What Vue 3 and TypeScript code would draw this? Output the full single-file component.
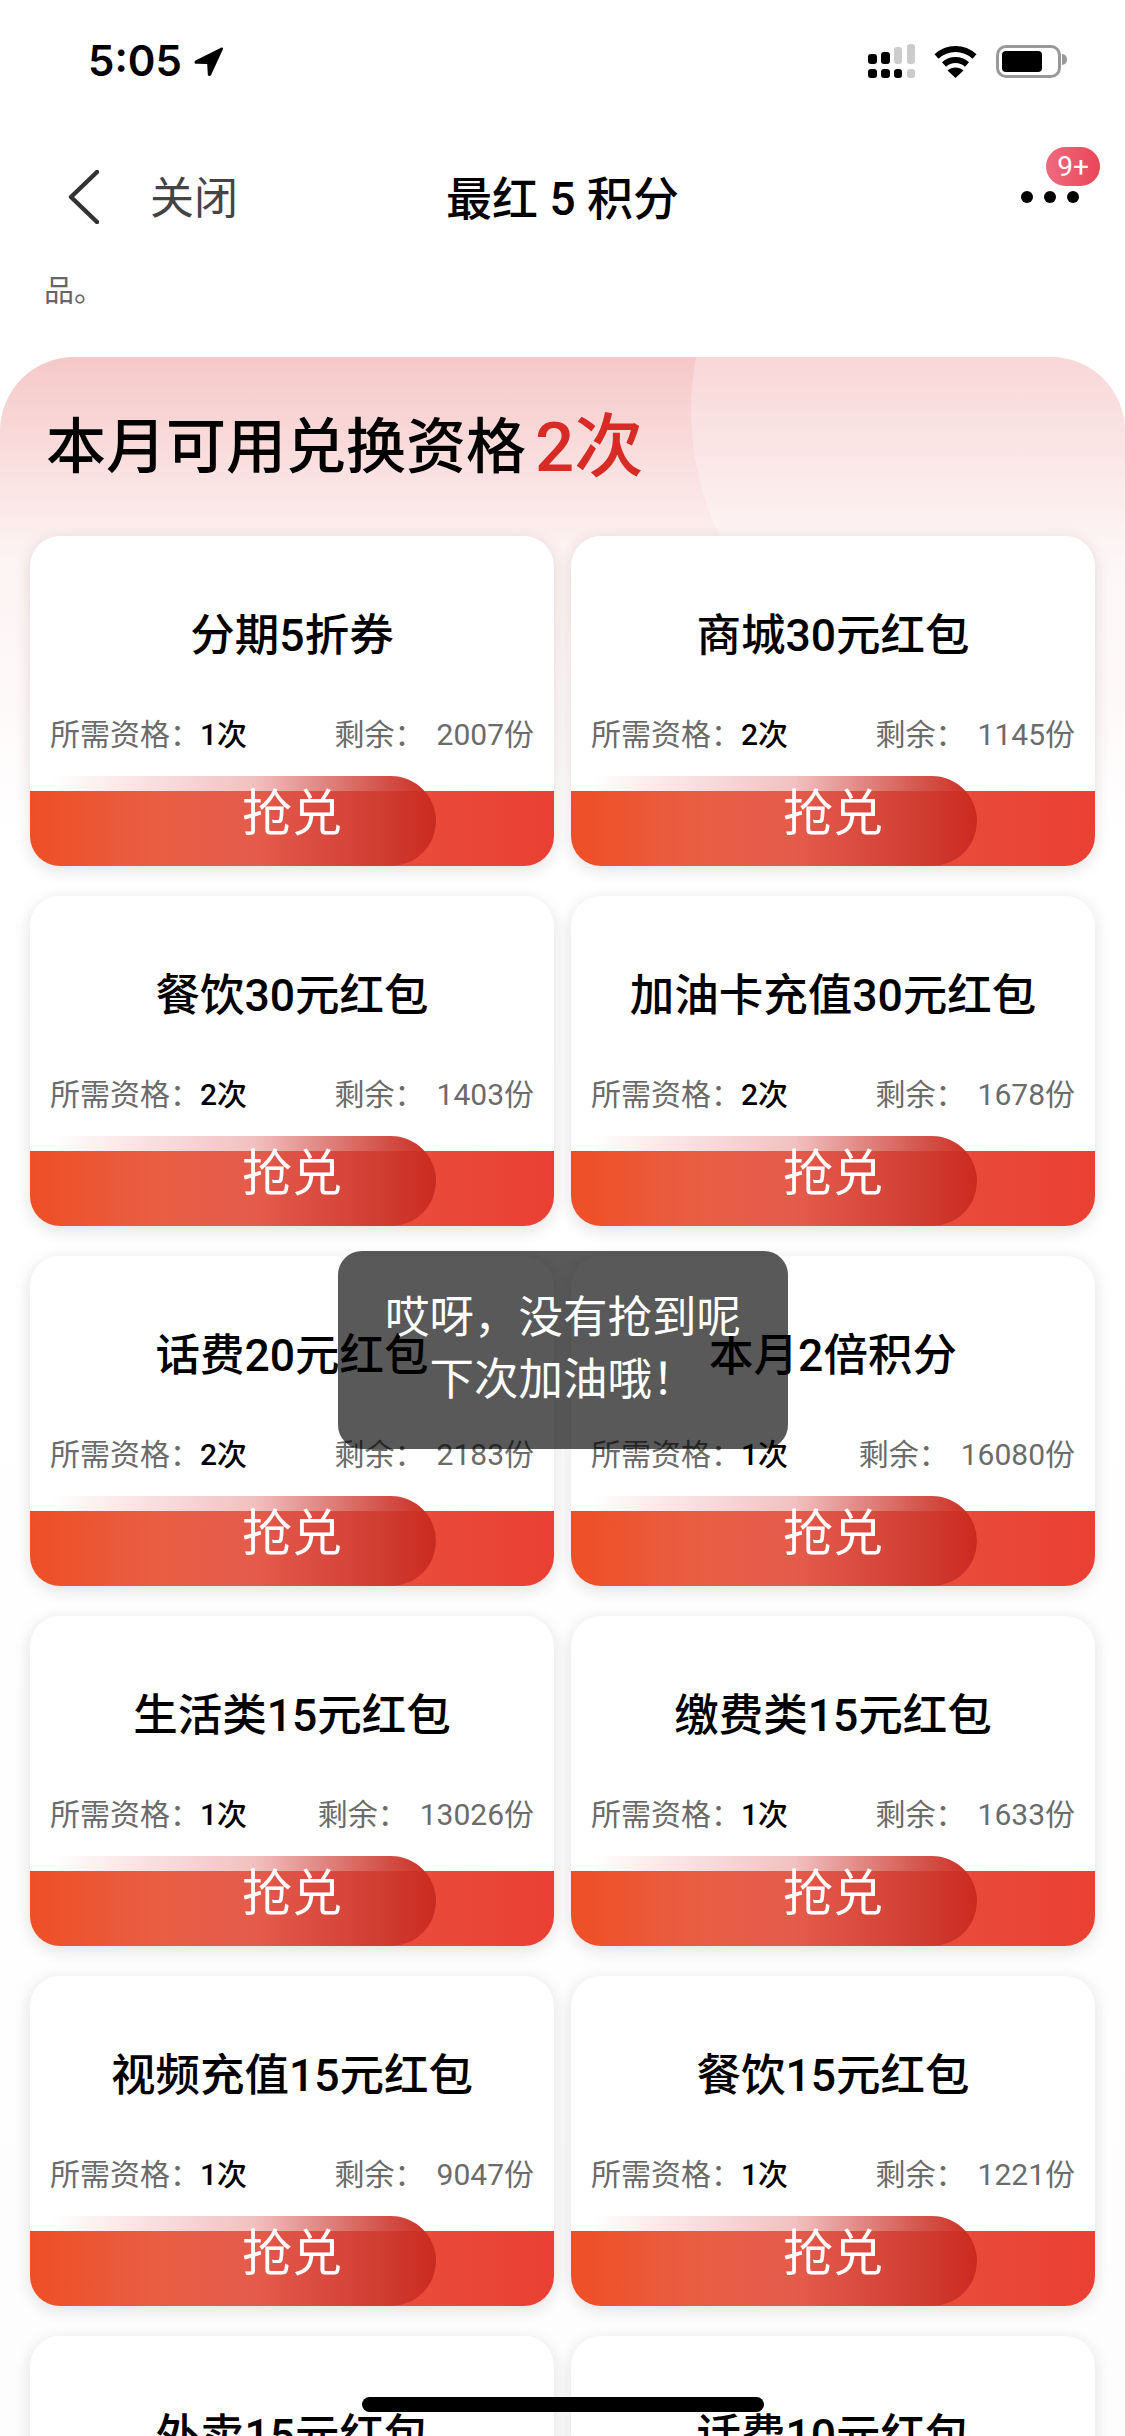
<template>
  <div class="page">
    <div class="status_bar">
      <div class="status_left">
        <span class="clock">5:05</span>
        <svg class="location" viewBox="0 0 29 29">
          <path d="M27.5 .6 2 13.2c-2.4 1.2-1.7 3.6.6 3.6l10.6.2.6 10.2c.1 2.2 2.6 2.6 3.5.4L28.8 2.4c.6-1.400-.2-2.300-1.300-1.800Z" fill="#000" />
        </svg>
      </div>
      <div class="status_right">
        <svg class="signal" viewBox="0 0 48 35">
          <rect x="0" y="10" width="9" height="10" rx="3" fill="#000" />
          <rect x="13" y="8" width="9" height="12" rx="3" fill="#000" />
          <rect x="26" y="3" width="8" height="17" rx="3" fill="#ccc" />
          <rect x="39" y="0" width="8" height="20" rx="3" fill="#ccc" />
          <rect x="0" y="25" width="9" height="9" rx="3" fill="#000" />
          <rect x="13" y="25" width="9" height="9" rx="3" fill="#000" />
          <rect x="26" y="25" width="8" height="9" rx="3" fill="#000" />
          <rect x="39" y="25" width="8" height="9" rx="3" fill="#ccc" />
        </svg>
        <svg class="wifi" viewBox="0 0 43 33">
          <path d="M2.500 11.500C13.500 1.500 29.500 1.500 40.500 11.500" fill="none" stroke="#000" stroke-width="6" />
          <path d="M10 19.500C16.500 13.500 26.500 13.500 33 19.500" fill="none" stroke="#000" stroke-width="6" />
          <path d="M21.500 33 13.500 25.500C18 21.500 25 21.500 29.500 25.500Z" fill="#000" />
        </svg>
        <div class="battery">
          <div class="battery_fill"></div>
          <div class="battery_nub"></div>
        </div>
      </div>
    </div>

    <div class="nav_bar">
      <div class="nav_left">
        <svg class="back" viewBox="0 0 31 54">
          <path d="M29 2 3 27l26 25" fill="none" stroke="#333" stroke-width="4.500" stroke-linecap="round" stroke-linejoin="round" />
        </svg>
        <span class="close">关闭</span>
      </div>
      <div class="nav_title">最红 5 积分</div>
      <div class="nav_right">
        <div class="more">
          <i></i><i></i><i></i>
          <span class="badge">9+</span>
        </div>
      </div>
    </div>

    <div class="cut_text">品&#x3002;</div>

    <div class="panel">
      <div class="panel_circle"></div>
      <h1 class="panel_title">本月可用兑换资格<span class="panel_count">2次</span></h1>
      <div class="grid">
        <div class="card" v-for="item in items" :key="item.name">
          <div class="card_name">{{ item.name }}</div>
          <div class="card_info">
            <div>所需资格&#xFF1A;<b>{{ item.need }}次</b></div>
            <div>剩余&#xFF1A;<span class="left_count">{{ item.left }}份</span></div>
          </div>
          <div class="card_btn">
            <div class="card_btn_shine"></div>
            <span class="card_btn_text">抢兑</span>
          </div>
        </div>
      </div>
    </div>

    <div class="toast">哎呀&#xFF0C;没有抢到呢<br />下次加油哦&#xFF01;</div>
    <div class="home_bar"></div>
  </div>
</template>

<script setup lang="ts">
interface Item {
  name: string;
  need: number;
  left: number;
}

const items: Item[] = [
  { name: '分期5折券', need: 1, left: 2007 },
  { name: '商城30元红包', need: 2, left: 1145 },
  { name: '餐饮30元红包', need: 2, left: 1403 },
  { name: '加油卡充值30元红包', need: 2, left: 1678 },
  { name: '话费20元红包', need: 2, left: 2183 },
  { name: '本月2倍积分', need: 1, left: 16080 },
  { name: '生活类15元红包', need: 1, left: 13026 },
  { name: '缴费类15元红包', need: 1, left: 1633 },
  { name: '视频充值15元红包', need: 1, left: 9047 },
  { name: '餐饮15元红包', need: 1, left: 1221 },
  { name: '外卖15元红包', need: 1, left: 3260 },
  { name: '话费10元红包', need: 1, left: 4518 }
];
</script>

<style>
html,
body {
  margin: 0;
  background: #fff;
}
</style>

<style scoped>
.page {
  position: relative;
  width: 1125px;
  height: 2436px;
  overflow: hidden;
  background: #fff;
  font-family: Roboto, "Noto Sans CJK SC", sans-serif;
}

.status_bar {
  display: flex;
  justify-content: space-between;
  align-items: center;
  height: 122px;
  padding: 0 64px 0 88px;
  box-sizing: border-box;
}

.status_left {
  display: flex;
  align-items: center;
  gap: 12px;
}

.clock {
  font-family: Inter, sans-serif;
  font-size: 42px;
  font-weight: 600;
  line-height: 48px;
  color: #000;
}

.location {
  width: 29px;
  height: 29px;
}

.status_right {
  display: flex;
  align-items: center;
}

.signal {
  width: 48px;
  height: 35px;
  margin-right: 18px;
}

.wifi {
  width: 43px;
  height: 33px;
  margin-right: 19px;
}

.battery {
  position: relative;
  width: 65px;
  height: 33px;
  padding: 3px;
  box-sizing: border-box;
  border: 3px solid #999;
  border-radius: 10px;
}

.battery_fill {
  width: 40px;
  height: 21px;
  border-radius: 4px;
  background: #000;
}

.battery_nub {
  position: absolute;
  top: 6px;
  right: -9px;
  width: 5px;
  height: 11px;
  border-radius: 0 5px 5px 0;
  background: #999;
}

.nav_bar {
  display: grid;
  grid-template-columns: 1fr auto 1fr;
  align-items: center;
  height: 112px;
  margin-top: 19px;
  padding: 0 68px;
}

.nav_left {
  display: flex;
  align-items: center;
  gap: 51px;
}

.back {
  width: 31px;
  height: 54px;
}

.close {
  margin-top: 3px;
  font-size: 44px;
  line-height: 60px;
  color: #444;
}

.nav_title {
  margin-top: 3px;
  font-size: 46px;
  font-weight: 500;
  line-height: 60px;
  color: #000;
}

.nav_right {
  display: flex;
  justify-content: flex-end;
}

.more {
  position: relative;
  display: flex;
  gap: 11px;
  margin-right: -22px;
}

.more i {
  width: 12px;
  height: 12px;
  border-radius: 50%;
  background: #000;
}

.badge {
  position: absolute;
  top: -44px;
  left: 25px;
  width: 54px;
  height: 39px;
  border-radius: 20px;
  background: linear-gradient(90deg, #ee6b80, #ea4557);
  font-size: 28px;
  line-height: 39px;
  text-align: center;
  color: #fff;
}

.cut_text {
  height: 40px;
  margin-top: 18px;
  padding-left: 44px;
  font-size: 30px;
  line-height: 40px;
  color: #666;
}

.panel {
  position: relative;
  margin-top: 46px;
  padding: 0 30px;
  overflow: hidden;
  border-radius: 74px 74px 0 0;
  background: linear-gradient(180deg, #f6c8c8 0, #fbe6e6 140px, #fdf3f3 200px, #fff 480px, #fdfdfd 100%);
}

.panel_circle {
  position: absolute;
  top: -235px;
  left: 691px;
  width: 576px;
  height: 576px;
  border-radius: 50%;
  background: rgba(255, 255, 255, 0.28);
}

.panel_title {
  position: relative;
  display: flex;
  align-items: center;
  height: 179px;
  margin: 0 0 0 16px;
  padding-bottom: 11px;
  box-sizing: border-box;
  font-size: 60px;
  font-weight: 500;
  color: #000;
}

.panel_count {
  margin-left: 9px;
  font-size: 69px;
  color: #d92b26;
}

.grid {
  position: relative;
  display: grid;
  grid-template-columns: 1fr 1fr;
  gap: 30px 17px;
}

.card {
  display: flex;
  flex-direction: column;
  height: 330px;
  overflow: hidden;
  border-radius: 30px;
  background: #fff;
  box-shadow: 0 4px 16px rgba(60, 30, 30, 0.14);
}

.card_name {
  margin-top: 70px;
  font-size: 44.500px;
  font-weight: 500;
  line-height: 60px;
  text-align: center;
  color: #000;
}

.card_info {
  display: flex;
  justify-content: space-between;
  margin-top: 49px;
  padding: 0 20px;
  font-size: 30px;
  line-height: 40px;
  color: #6b6b6b;
}

.card_info b {
  font-weight: 500;
  color: #000;
}

.left_count {
  margin-left: 12px;
}

.card_btn {
  position: relative;
  height: 75px;
  margin-top: auto;
  background: linear-gradient(90deg, #ee4f26 0, #ec5c3a 25%, #e9503e 60%, #ea4034 100%);
}

.card_btn_shine {
  position: absolute;
  top: -15px;
  left: 0;
  width: 406px;
  height: 90px;
  border-radius: 0 45px 45px 0;
  background: linear-gradient(90deg, rgba(220, 90, 90, 0) 5%, rgba(220, 100, 100, 0.4) 55%, rgba(205, 60, 50, 0.85) 85%, #cb2b1f 100%);
}

.card_btn_text {
  position: relative;
  display: block;
  margin-top: 3px;
  font-size: 50px;
  line-height: 40px;
  text-align: center;
  color: #fff;
}

.toast {
  position: absolute;
  top: 1251px;
  left: 338px;
  width: 450px;
  height: 198px;
  padding-top: 36px;
  box-sizing: border-box;
  border-radius: 24px;
  background: rgba(0, 0, 0, 0.65);
  font-size: 44.500px;
  line-height: 62px;
  text-align: center;
  color: #fff;
}

.home_bar {
  position: absolute;
  top: 2397px;
  left: 362px;
  width: 402px;
  height: 15px;
  border-radius: 8px;
  background: #000;
}
</style>
